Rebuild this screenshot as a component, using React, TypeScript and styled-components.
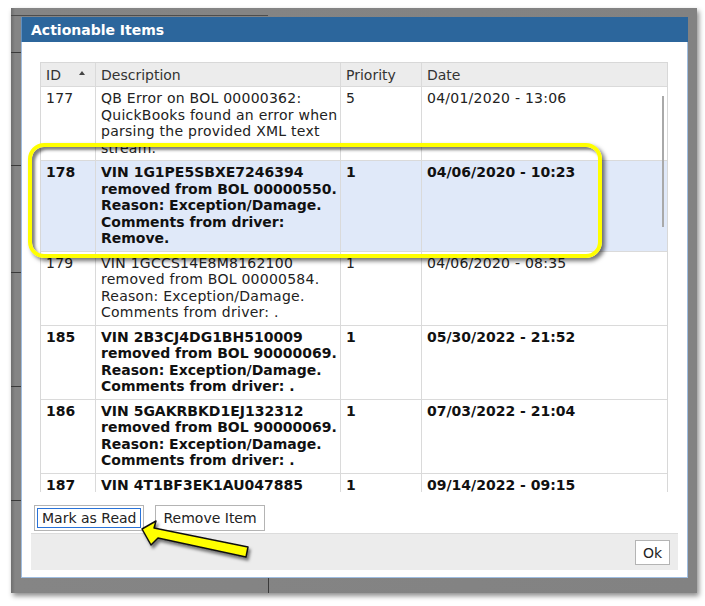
import React from 'react'
import styled, { createGlobalStyle } from 'styled-components';

const GlobalStyle = createGlobalStyle`
  html, body {
    margin: 0;
    padding: 0;
    background: #ffffff;
  }
  body {
    font-family: "DejaVu Sans", Verdana, sans-serif;
    color: #222;
  }
`;

const Page = styled.div`
  position: relative;
  width: 705px;
  height: 606px;
  padding: 8px 0 0 11px;
  box-sizing: border-box;
`;

// gray window chrome behind the dialog, with bits of the page underneath showing through
const Frame = styled.div`
  width: 686px;
  height: 585px;
  box-sizing: border-box;
  padding: 9px 9px 15px 10px;
  background:
    linear-gradient(#4d4d4d, #4d4d4d) 0 7px / 257px 1px no-repeat,
    linear-gradient(#3a3a3a, #3a3a3a) 0 44px / 10px 1px no-repeat,
    linear-gradient(#3a3a3a, #3a3a3a) 0 157px / 10px 1px no-repeat,
    linear-gradient(#3a3a3a, #3a3a3a) 0 264px / 10px 1px no-repeat,
    linear-gradient(#3a3a3a, #3a3a3a) 0 378px / 10px 1px no-repeat,
    linear-gradient(#3a3a3a, #3a3a3a) 0 492px / 10px 1px no-repeat,
    linear-gradient(#3a3a3a, #3a3a3a) 257px 570px / 1px 15px no-repeat,
    linear-gradient(90deg, #6e6e6e 0, #858585 4px, #828282 100%);
  box-shadow: 2px 3px 5px rgba(0, 0, 0, 0.45);
`;

const Dialog = styled.div`
  width: 667px;
  height: 561px;
  box-sizing: border-box;
  border: 1px solid #9fbde0;
  border-top: 0;
  background: #ffffff;
  display: flex;
  flex-direction: column;
`;

const TitleBar = styled.div`
  height: 25px;
  flex: none;
  margin: 0 -1px;
  background: #2c669c;
  border-left: 1px solid #5f8fc0;
  color: #ffffff;
  font-weight: 700;
  font-size: 14px;
  line-height: 27px;
  padding-left: 9px;
`;

const Body = styled.div`
  padding: 20px 19px 0 18px;
`;

const Grid = styled.div`
  width: 628px;
  height: 430px;
  box-sizing: border-box;
  border: 1px solid #d8d8d8;
  border-bottom: 0;
  display: flex;
  flex-direction: column;
`;

const Columns = `
  display: grid;
  grid-template-columns: 55px 245px 81px 1fr;
`;

const HeaderRow = styled.div`
  ${Columns}
  height: 24px;
  flex: none;
  background: #ececec;
`;

const HeaderCell = styled.div<{ $last?: boolean }>`
  display: flex;
  align-items: center;
  gap: 18px;
  padding: 0 5px;
  font-size: 14px;
  color: #333;
  border-right: ${p => (p.$last ? '0' : '1px solid #dadada')};
  border-bottom: 1px solid #dadada;
`;

const SortArrow = styled.span`
  display: inline-block;
  width: 0;
  height: 0;
  margin-top: -3px;
  border-left: 3px solid transparent;
  border-right: 3px solid transparent;
  border-bottom: 4px solid #444;
`;

const Rows = styled.div`
  position: relative;
  flex: 1;
  overflow: hidden;
`;

const Row = styled.div<{ $selected?: boolean; $bold?: boolean }>`
  ${Columns}
  background: ${p => (p.$selected ? '#e0e9f9' : '#ffffff')};
  font-weight: ${p => (p.$bold ? 700 : 400)};
  letter-spacing: ${p => (p.$bold ? '0' : '0.25px')};
  color: ${p => (p.$bold ? '#111' : '#222')};
`;

const Cell = styled.div<{ $last?: boolean }>`
  padding: 3px 5px 4px;
  font-size: 14px;
  line-height: 16.5px;
  white-space: nowrap;
  border-right: ${p => (p.$last ? '0' : '1px solid #dadada')};
  border-bottom: 1px solid #dadada;
`;

const ScrollThumb = styled.div`
  position: absolute;
  right: 3px;
  top: 9px;
  width: 2px;
  height: 131px;
  background: #a9a9a9;
`;

const ButtonRow = styled.div`
  display: flex;
  gap: 11px;
  padding: 13px 0 0 12px;
`;

const Button = styled.button<{ $focused?: boolean }>`
  height: 26px;
  padding: 0 7px;
  background: #ffffff;
  border: 1px solid #b4b4b4;
  border-radius: 0;
  font-family: "DejaVu Sans", Verdana, sans-serif;
  font-size: 14px;
  color: #222;
  box-shadow: ${p => (p.$focused ? 'inset 0 0 0 2px #fff, inset 0 0 0 3px #2a73d8' : 'none')};
`;

const Footer = styled.div`
  margin: 2px 9px 0;
  height: 37px;
  box-sizing: border-box;
  border-top: 1px solid #dcdcdc;
  background: #ececec;
  display: flex;
  justify-content: flex-end;
  align-items: flex-start;
  padding: 6px 8px 0 0;
`;

const OkButton = styled(Button)`
  height: 25px;
  width: 35px;
  padding: 0;
`;

// yellow call-out drawn around the selected row
const Callout = styled.div`
  position: absolute;
  left: 28px;
  top: 143px;
  width: 574px;
  height: 115px;
  box-sizing: border-box;
  border: 4px solid #ffff00;
  border-radius: 16px;
  box-shadow: 3px 3px 4px rgba(0, 0, 0, 0.55), inset 3px 3px 3px rgba(0, 0, 0, 0.5);
  pointer-events: none;
`;

const Pointer = styled.svg`
  position: absolute;
  left: 136px;
  top: 515px;
  width: 120px;
  height: 50px;
  overflow: visible;
  pointer-events: none;
`;

interface Item {
  id: number;
  lines: string[];
  priority: number;
  date: string;
  bold?: boolean;
  selected?: boolean;
}

const items: Item[] = [
  {
    id: 177,
    lines: ['QB Error on BOL 00000362:', 'QuickBooks found an error when', 'parsing the provided XML text', 'stream.'],
    priority: 5,
    date: '04/01/2020 - 13:06',
  },
  {
    id: 178,
    lines: ['VIN 1G1PE5SBXE7246394', 'removed from BOL 00000550.', 'Reason: Exception/Damage.', 'Comments from driver:', 'Remove.'],
    priority: 1,
    date: '04/06/2020 - 10:23',
    bold: true,
    selected: true,
  },
  {
    id: 179,
    lines: ['VIN 1GCCS14E8M8162100', 'removed from BOL 00000584.', 'Reason: Exception/Damage.', 'Comments from driver: .'],
    priority: 1,
    date: '04/06/2020 - 08:35',
  },
  {
    id: 185,
    lines: ['VIN 2B3CJ4DG1BH510009', 'removed from BOL 90000069.', 'Reason: Exception/Damage.', 'Comments from driver: .'],
    priority: 1,
    date: '05/30/2022 - 21:52',
    bold: true,
  },
  {
    id: 186,
    lines: ['VIN 5GAKRBKD1EJ132312', 'removed from BOL 90000069.', 'Reason: Exception/Damage.', 'Comments from driver: .'],
    priority: 1,
    date: '07/03/2022 - 21:04',
    bold: true,
  },
  {
    id: 187,
    lines: ['VIN 4T1BF3EK1AU047885', 'removed from BOL 90000069.', 'Reason: Exception/Damage.', 'Comments from driver: .'],
    priority: 1,
    date: '09/14/2022 - 09:15',
    bold: true,
  },
];

const App = () => {
  return (
    <Page>
      <GlobalStyle />
      <Frame>
        <Dialog>
          <TitleBar>Actionable Items</TitleBar>
          <Body>
            <Grid>
              <HeaderRow>
                <HeaderCell>ID <SortArrow /></HeaderCell>
                <HeaderCell>Description</HeaderCell>
                <HeaderCell>Priority</HeaderCell>
                <HeaderCell $last>Date</HeaderCell>
              </HeaderRow>
              <Rows>
                {items.map(item => (
                  <Row key={item.id} $bold={item.bold} $selected={item.selected}>
                    <Cell>{item.id}</Cell>
                    <Cell>
                      {item.lines.map((line, i) => (
                        <React.Fragment key={i}>
                          {i > 0 && <br />}
                          {line}
                        </React.Fragment>
                      ))}
                    </Cell>
                    <Cell>{item.priority}</Cell>
                    <Cell $last>{item.date}</Cell>
                  </Row>
                ))}
                <ScrollThumb />
              </Rows>
            </Grid>
          </Body>
          <ButtonRow>
            <Button $focused>Mark as Read</Button>
            <Button>Remove Item</Button>
          </ButtonRow>
          <Footer>
            <OkButton>Ok</OkButton>
          </Footer>
        </Dialog>
      </Frame>
      <Callout />
      <Pointer viewBox="0 0 120 50">
        <defs>
          <filter id="pointerShadow" x="-20%" y="-40%" width="140%" height="180%">
            <feDropShadow dx="2" dy="3" stdDeviation="1.5" floodColor="#000" floodOpacity="0.5" />
          </filter>
        </defs>
        <polygon
          points="6,14 20,6 18,13 112,32 110,42 22,23 15,30"
          fill="#ffff00"
          stroke="#111"
          strokeWidth="1.5"
          strokeLinejoin="round"
          filter="url(#pointerShadow)"
        />
      </Pointer>
    </Page>
  )
}

export default App
